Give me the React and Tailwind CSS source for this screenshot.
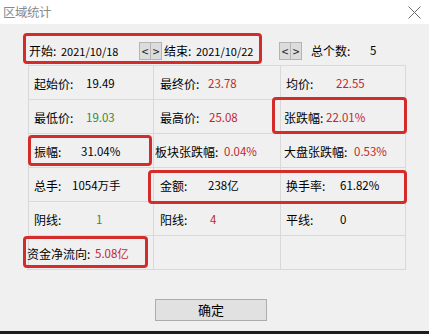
import React from 'react';

const RED = 'text-[#c2272d]';
const GREEN = 'text-[#2f8a3c]';

// one grid cell: label with fixed width so the values line up like the dialog
const Cell = ({ label, value, w, color = 'text-black', pad = 'pl-[5px]' }) => (
	<div className={`h-[34px] border-r border-b border-[#d9d9d9] flex items-center pt-[3px] ${pad}`}>
		{label ? (
			<>
				<span className="shrink-0" style={{ width: w }}>{label}</span>
				<span className={`text-[11.5px] ${color}`}>{value}</span>
			</>
		) : null}
	</div>
);

const ArrowBtns = () => (
	<div className="flex h-[18px]">
		<span className="w-[12px] h-[18px] bg-[#dcdcdc] border border-[#b4b4b4] flex items-center justify-center text-[12px] leading-none text-[#222]">&lt;</span>
		<span className="w-[11px] h-[18px] bg-[#dcdcdc] border border-[#b4b4b4] border-l-0 flex items-center justify-center text-[12px] leading-none text-[#222]">&gt;</span>
	</div>
);

const Mark = ({ className }) => (
	<div className={`absolute border-[3px] border-[#d42b2b] rounded-[4px] pointer-events-none ${className}`} />
);

const App = () => {
	return (
		<div
			className="relative w-[429px] h-[334px] bg-[#f0f0f0] flex flex-col overflow-hidden text-[12px] text-black"
			style={{ fontFamily: '"Noto Sans CJK SC", "Noto Sans", sans-serif' }}
		>
			{/* title bar */}
			<div className="h-[24px] bg-white flex items-center justify-between pl-[3px] pr-[7px]">
				<span className="text-[12.5px] text-[#8a8a8a] tracking-[-0.5px]">区域统计</span>
				<svg width="13" height="13" viewBox="0 0 13 13" className="mr-[1px]">
					<path d="M0.5 0.5L12.5 12.5M12.5 0.5L0.5 12.5" stroke="#6a6a6a" strokeWidth="1" fill="none" />
				</svg>
			</div>

			<div className="pl-[28px]">
				{/* date range row */}
				<div className="mt-[12px] h-[29px] flex items-center pt-[1px]">
					<span className="w-[33px] pl-[1px]">开始:</span>
					<span className="w-[78px] text-[11px]">2021/10/18</span>
					<ArrowBtns />
					<span className="ml-[2px] w-[32px]">结束:</span>
					<span className="w-[83px] text-[11px]">2021/10/22</span>
					<ArrowBtns />
					<span className="ml-[9px] w-[59px]">总个数:</span>
					<span className="text-[11.5px]">5</span>
				</div>

				{/* stats grid */}
				<div className="w-[378px] grid grid-cols-[125px_127px_125px] border-l border-t border-[#d9d9d9]">
					<Cell label="起始价:" value="19.49" w={52} />
					<Cell label="最终价:" value="23.78" w={48} color={RED} pad="pl-[6px]" />
					<Cell label="均价:" value="22.55" w={50} color={RED} />

					<Cell label="最低价:" value="19.03" w={52} color={GREEN} />
					<Cell label="最高价:" value="25.08" w={49} color={RED} pad="pl-[6px]" />
					<Cell label="张跌幅:" value="22.01%" w={42} color={RED} pad="pl-[3px]" />

					<Cell label="振幅:" value="31.04%" w={47} />
					<Cell label="板块张跌幅:" value="0.04%" w={69} color={RED} pad="pl-[1px]" />
					<Cell label="大盘张跌幅:" value="0.53%" w={70} color={RED} pad="pl-[3px]" />

					<Cell label="总手:" value="1054万手" w={38} />
					<Cell label="金额:" value="238亿" w={48} pad="pl-[6px]" />
					<Cell label="换手率:" value="61.82%" w={54} />

					<Cell label="阴线:" value="1" w={62} color={GREEN} />
					<Cell label="阳线:" value="4" w={50} color={RED} pad="pl-[6px]" />
					<Cell label="平线:" value="0" w={54} />

					<Cell label="资金净流向:" value="5.08亿" w={68} color={RED} pad="-ml-[2px]" />
					<Cell />
					<Cell />
				</div>
			</div>

			{/* ok button */}
			<div className="mt-[29px] pl-[155px]">
				<button className="w-[112px] h-[22px] bg-[#e1e1e1] border border-[#adadad] text-[13px] text-black flex items-center justify-center">
					确定
				</button>
			</div>

			<div className="mt-auto h-[3px] bg-[#1e1e1e]" />

			{/* red annotation boxes */}
			<Mark className="left-[23px] top-[33px] w-[239px] h-[31px]" />
			<Mark className="left-[272px] top-[97px] w-[135px] h-[37px]" />
			<Mark className="left-[28px] top-[135px] w-[124px] h-[31px]" />
			<Mark className="left-[148px] top-[170px] w-[259px] h-[34px]" />
			<Mark className="left-[23px] top-[236px] w-[125px] h-[32px]" />
		</div>
	);
};

export default App;
